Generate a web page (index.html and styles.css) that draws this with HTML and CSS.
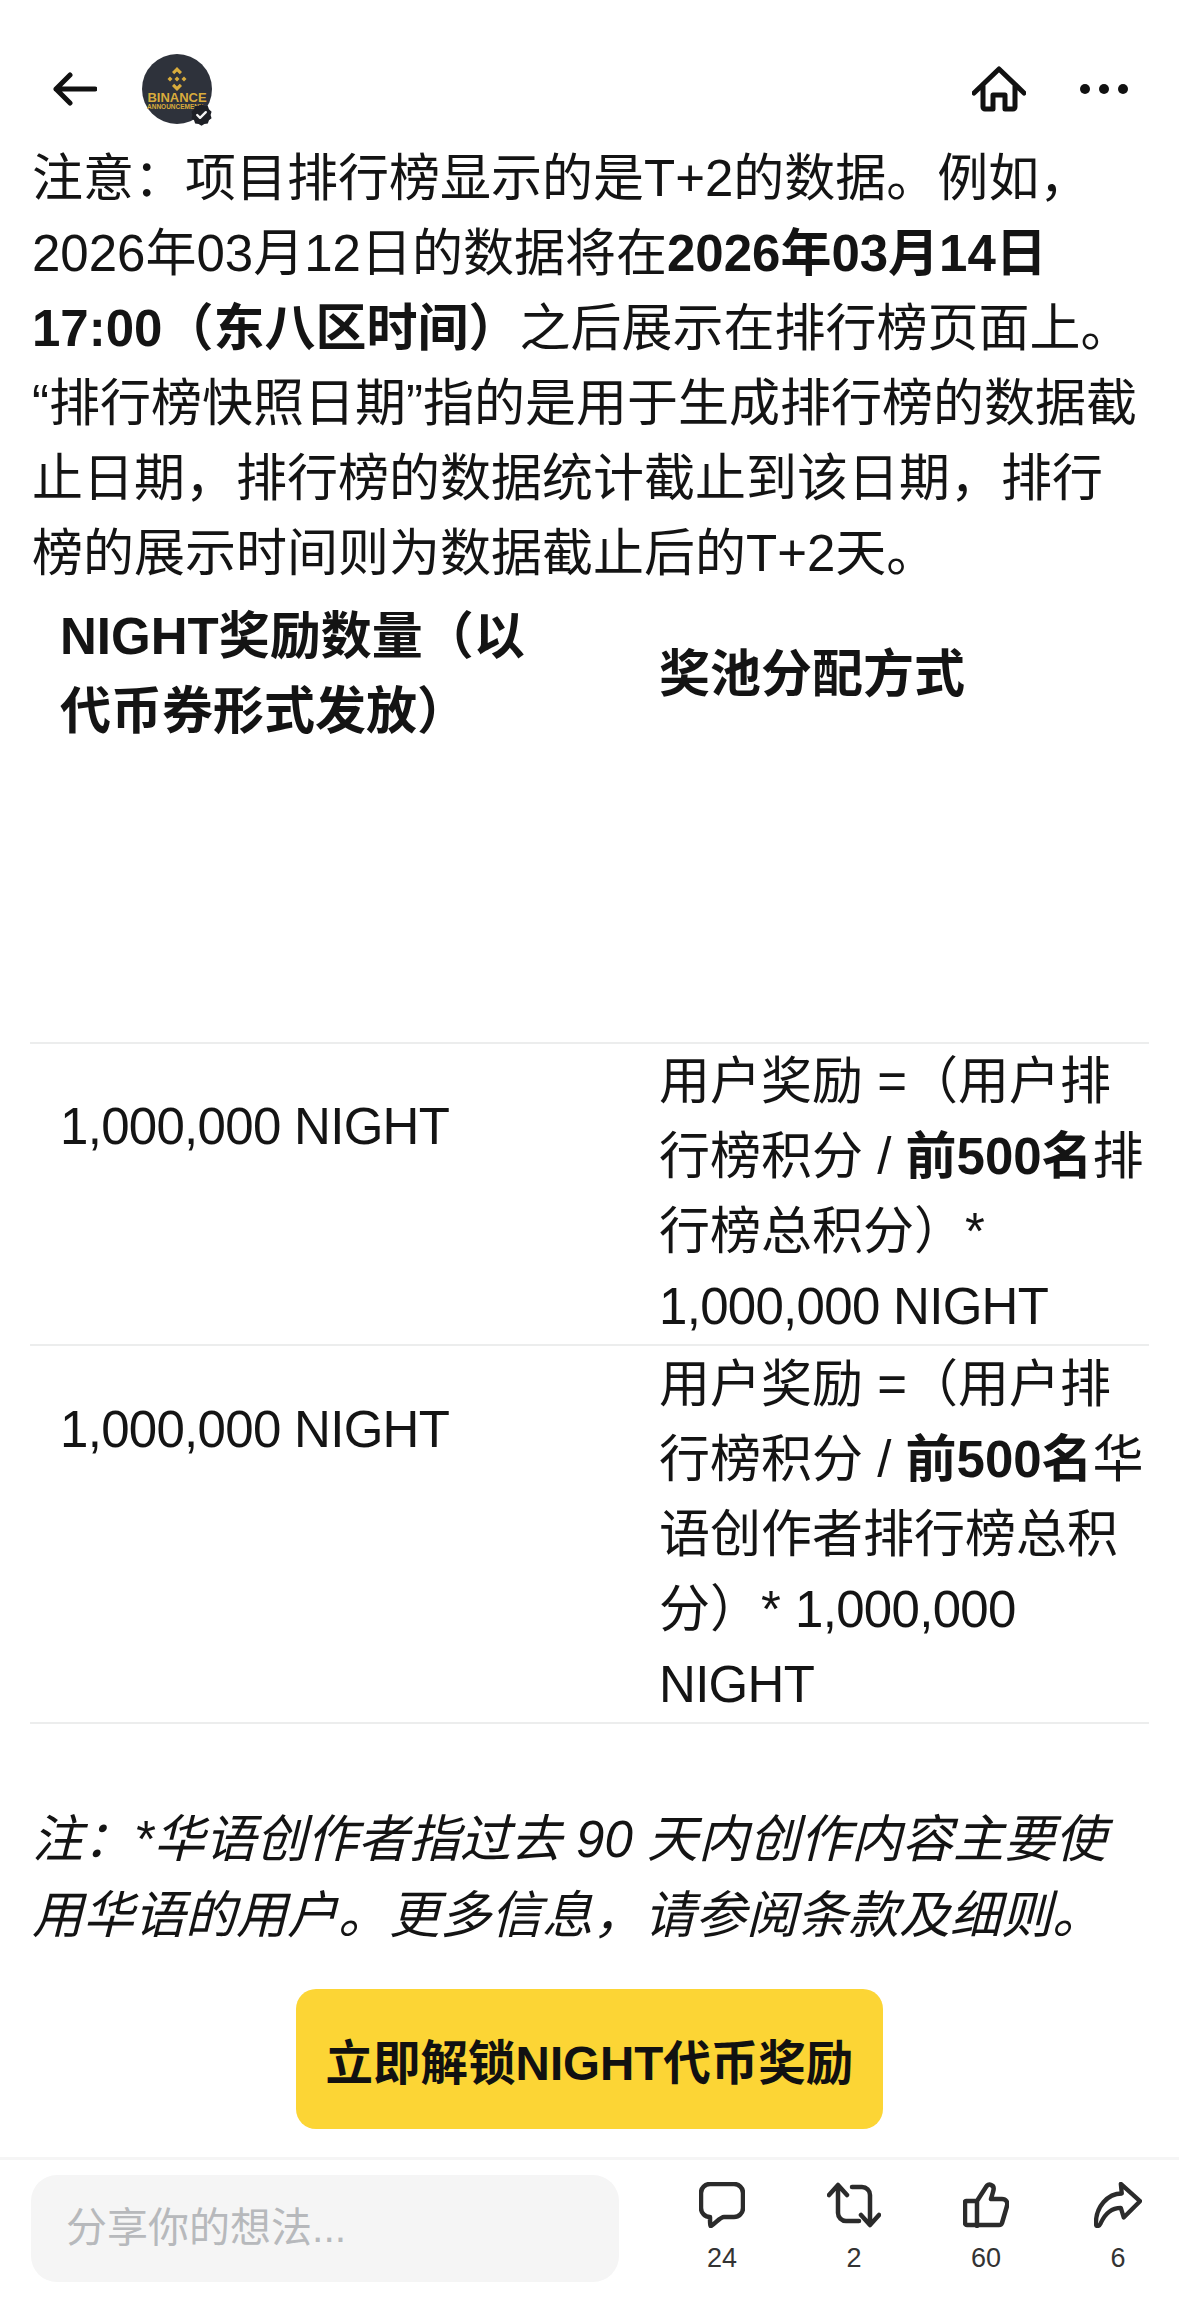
FILE: index.html
```html
<!DOCTYPE html>
<html lang="zh-CN">
<head>
<meta charset="utf-8">
<title>Binance Announcement</title>
<link rel="stylesheet" href="styles.css">
</head>
<body>
<div class="page">
  <header class="topbar">
    <svg class="back" viewBox="0 0 44 34" aria-hidden="true"><path d="M42 17H3M17 3 3 17l14 14"/></svg>
    <div class="avatar">
      <svg viewBox="0 0 70 70" aria-hidden="true">
        <circle cx="35" cy="35" r="35" fill="#2e323b"/>
        <g fill="#d9ac3c">
          <path d="M35 13l5 5-2.2 2.2L35 17.4l-2.8 2.8L30 18z"/>
          <path d="M35 37l5-5-2.2-2.2L35 32.6l-2.8-2.8L30 32z"/>
          <path d="M25.500 25l2.500-2.500 2.500 2.500-2.500 2.500z"/>
          <path d="M39.500 25l2.500-2.500 2.500 2.500-2.500 2.500z"/>
          <path d="M32.500 25l2.500-2.500 2.500 2.500-2.500 2.500z"/>
          <text class="brand" x="35" y="48" text-anchor="middle">BINANCE</text>
          <text class="brand-sub" x="33" y="55" text-anchor="middle">ANNOUNCEMENT</text>
        </g>
      </svg>
      <svg class="verified" viewBox="0 0 24 24" aria-hidden="true">
        <path d="M12 1l3 2 3.600.2 1.200 3.400 2.700 2.400-1 3.500 1 3.500-2.700 2-1.200 3.400-3.600.4-3 2-3-2-3.600-.4-1.200-3.400-2.700-2 1-3.500-1-3.500L4.200 6.600l1.200-3.400L9 3z" fill="#1e2026"/>
        <path d="M7.500 12.500l3 3 6-6" fill="none" stroke="#f5f5f5" stroke-width="2.400" stroke-linecap="round" stroke-linejoin="round"/>
      </svg>
    </div>
    <div class="top-actions">
      <svg class="home" viewBox="0 0 54 46" aria-hidden="true"><path d="M2 27 27 3l25 24M11 20v21a2 2 0 0 0 2 2h8V29h12v14h8a2 2 0 0 0 2-2V20"/></svg>
      <div class="dots"><span></span><span></span><span></span></div>
    </div>
  </header>

  <main class="content">
    <p class="para">注意：项目排行榜显示的是T+2的数据。例如，<br>2026年03月12日的数据将在<strong>2026年03月14日<br>17:00（东八区时间）</strong>之后展示在排行榜页面上。<br>“排行榜快照日期”指的是用于生成排行榜的数据截<br>止日期，排行榜的数据统计截止到该日期，排行<br>榜的展示时间则为数据截止后的T+2天。</p>

    <section class="table">
      <div class="row head">
        <div class="cell c1"><strong>NIGHT奖励数量（以<br>代币券形式发放）</strong></div>
        <div class="cell c2"><strong>奖池分配方式</strong></div>
      </div>
      <div class="row">
        <div class="cell c1"><span class="amount">1,000,000 NIGHT</span></div>
        <div class="cell c2">用户奖励 =（用户排<br>行榜积分 / <strong>前500名</strong>排<br>行榜总积分）*<br><span class="amount">1,000,000 NIGHT</span></div>
      </div>
      <div class="row">
        <div class="cell c1"><span class="amount">1,000,000 NIGHT</span></div>
        <div class="cell c2">用户奖励 =（用户排<br>行榜积分 / <strong>前500名</strong>华<br>语创作者排行榜总积<br>分）* <span class="amount">1,000,000<br>NIGHT</span></div>
      </div>
    </section>

    <p class="note">注：*华语创作者指过去 90 天内创作内容主要使<br>用华语的用户。更多信息，请参阅条款及细则。</p>

    <div class="cta-wrap"><a class="cta">立即解锁NIGHT代币奖励</a></div>
  </main>

  <footer class="bottombar">
    <div class="input">分享你的想法...</div>
    <div class="actions">
      <div class="action">
        <svg viewBox="0 0 46 46" aria-hidden="true"><path d="M11 2h24a9 9 0 0 1 9 9v15a9 9 0 0 1-9 9H25c-4 0-9 7-13 9-1 .500-1-6-1-9-5 0-9-4-9-9V11a9 9 0 0 1 9-9z"/></svg>
        <span>24</span>
      </div>
      <div class="action">
        <svg viewBox="0 0 54 46" aria-hidden="true"><path d="M2 13 11 3l9 10M11 4v27a8 8 0 0 0 8 8h13M25 5h10a8 8 0 0 1 8 8v27M34 33l9 10 9-10"/></svg>
        <span>2</span>
      </div>
      <div class="action">
        <svg viewBox="0 0 46 46" aria-hidden="true"><path d="M14 19 23 5c1-2 3-3 5-2 3 1 3 4 2 7l-2 7h11c4 0 6 3 5 7l-5 17c-.500 2-1 2-3 2H4c-1 0-2-1-2-2V21c-1 0 0-2 1-2zM14 19v25"/></svg>
        <span>60</span>
      </div>
      <div class="action">
        <svg viewBox="0 0 50 48" aria-hidden="true"><path d="M28 2l20 18-17 17-3-10c-8 0-16 5-21 16-2 4-5 4-5 0C2 26 14 12 29 12z"/></svg>
        <span>6</span>
      </div>
    </div>
  </footer>
</div>
</body>
</html>
```

FILE: styles.css
```css
* { box-sizing: border-box; }
html, body { margin: 0; padding: 0; background: #fff; }
body {
  font-family: "Liberation Sans", "Noto Sans CJK SC", sans-serif;
  color: #141414;
}
.page {
  width: 1179px;
  height: 2305px;
  display: flex;
  flex-direction: column;
  overflow: hidden;
}
.topbar {
  height: 139px;
  flex: none;
  display: flex;
  align-items: flex-start;
  padding: 54px 0 0 53px;
}
.back {
  width: 44px;
  height: 34px;
  margin: 18px 45px 0 0;
  fill: none;
  stroke: #111;
  stroke-width: 5;
  stroke-linecap: round;
  stroke-linejoin: round;
}
.avatar { position: relative; width: 70px; height: 70px; }
.avatar > svg:first-child { display: block; width: 70px; height: 70px; }
.brand { font: 700 13px "Liberation Sans", sans-serif; }
.brand-sub { font: 700 6.500px "Liberation Sans", sans-serif; }
.verified { position: absolute; left: 48px; top: 49px; width: 23px; height: 23px; }
.top-actions {
  margin-left: auto;
  display: flex;
  align-items: center;
  height: 70px;
  padding-right: 51px;
}
.home {
  width: 54px;
  height: 46px;
  margin-right: 54px;
  fill: none;
  stroke: #111;
  stroke-width: 5;
  stroke-linecap: round;
  stroke-linejoin: round;
}
.dots { display: flex; gap: 9px; }
.dots span { width: 10px; height: 10px; border-radius: 50%; background: #111; }

.content { padding: 0 30px; flex: 1; display: flex; flex-direction: column; }
.para {
  margin: 2px 0 8px;
  padding-left: 2px;
  font-size: 51px;
  line-height: 75px;
  white-space: nowrap;
}
strong { font-weight: 700; }
.amount { letter-spacing: -0.7px; }
.table { display: flex; flex-direction: column; }
.row {
  display: flex;
  border-top: 2px solid #eceded;
  font-size: 51px;
  line-height: 75px;
  white-space: nowrap;
}
.row.head { border-top: 0; height: 443px; }
.row:last-child { border-bottom: 2px solid #eceded; padding-top: 1px; }
.cell.c1 { width: 629px; padding: 45px 0 0 30px; }
.cell.c2 { padding-left: 0; }
.row.head .cell.c1 { padding-top: 0; }
.row.head .cell.c2 { padding-top: 38px; }
.note {
  margin: 78px 0 0;
  padding-left: 2px;
  font-size: 51px;
  line-height: 76px;
  font-style: italic;
  white-space: nowrap;
}
.cta-wrap { display: flex; justify-content: center; margin-top: 35px; }
.cta {
  width: 587px;
  height: 140px;
  border-radius: 20px;
  background: #fcd535;
  color: #111;
  display: flex;
  align-items: center;
  justify-content: center;
  font-size: 47.500px;
  font-weight: 600;
}
.bottombar {
  flex: none;
  height: 148px;
  border-top: 3px solid #f5f5f5;
  display: flex;
  align-items: flex-start;
  padding: 15px 0 0 31px;
  position: relative;
}
.input {
  flex: none;
  width: 588px;
  height: 107px;
  border-radius: 26px;
  background: #f5f5f5;
  color: #b7b9bc;
  font-size: 41px;
  line-height: 107px;
  padding-left: 35px;
}
.actions {
  display: flex;
  margin-left: 53px;
  width: 496px;
  flex: none;
  justify-content: space-between;
  padding: 7px 0 0 0;
}
.action {
  width: 100px;
  display: flex;
  flex-direction: column;
  align-items: center;
  font-size: 27px;
  color: #333;
}
.action svg {
  height: 46px;
  width: auto;
  fill: none;
  stroke: #2b2b2b;
  stroke-width: 4.500;
  stroke-linecap: round;
  stroke-linejoin: round;
}
.action span { margin-top: 14px; line-height: 32px; }
```
